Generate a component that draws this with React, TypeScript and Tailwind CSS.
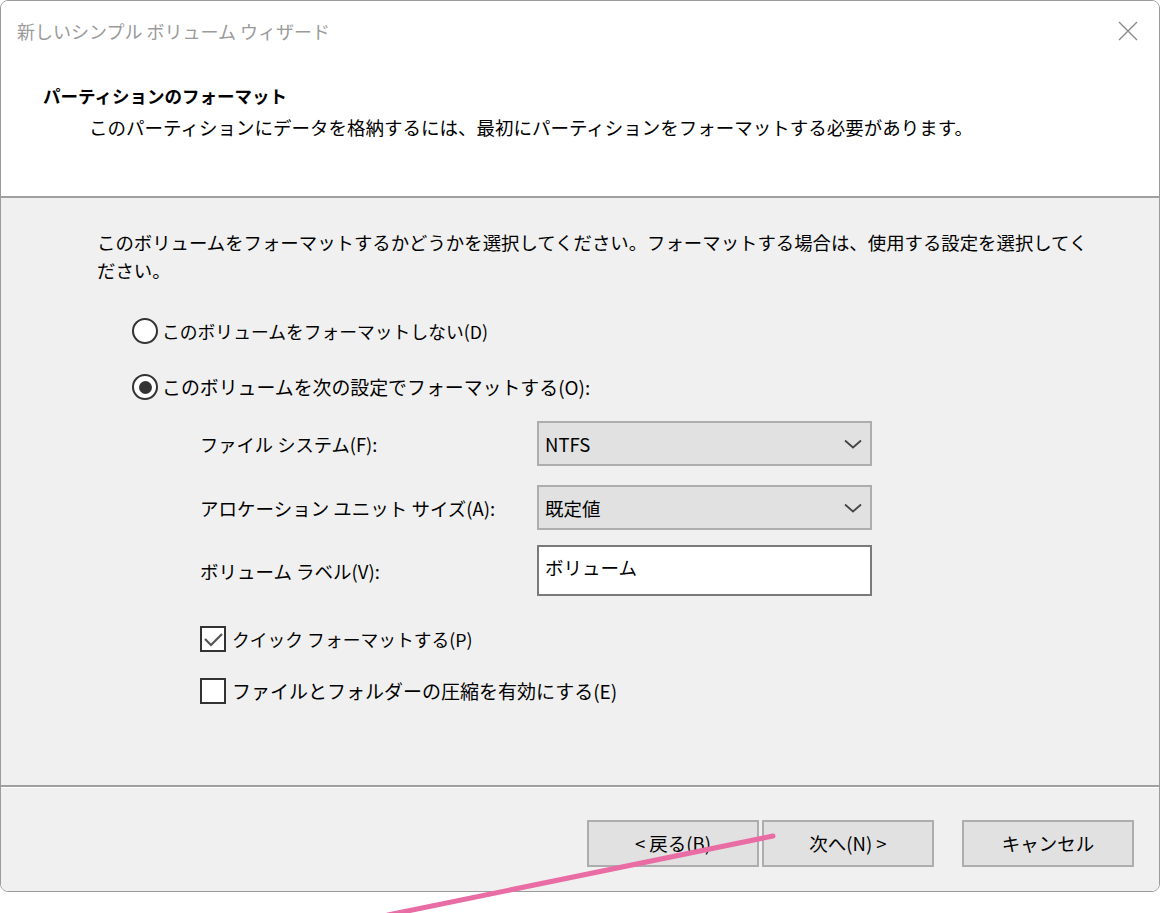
import React from 'react';

const font = "font-['Noto_Sans_CJK_JP','Noto_Sans',sans-serif]";

function Radio({ checked }: { checked?: boolean }) {
  return (
    <span className="w-[26px] h-[26px] rounded-full border-2 border-[#333333] bg-white flex items-center justify-center shrink-0">
      {checked && <span className="w-[13px] h-[13px] rounded-full bg-[#333333]" />}
    </span>
  );
}

function Checkbox({ checked }: { checked?: boolean }) {
  return (
    <span className="w-[26px] h-[26px] border-2 border-[#333333] bg-white flex items-center justify-center shrink-0">
      {checked && (
        <svg width="22" height="22" viewBox="0 0 22 22" fill="none" stroke="#555555" strokeWidth={2.2}>
          <path d="M3 11l6 6L20 6" />
        </svg>
      )}
    </span>
  );
}

function Chevron() {
  return (
    <svg width="18" height="10" viewBox="0 0 18 10" fill="none" stroke="#444444" strokeWidth={1.8}>
      <path d="M1 1.5l8 7 8-7" />
    </svg>
  );
}

function Dropdown({ value }: { value: string }) {
  return (
    <div className="w-[335px] h-[45px] border-2 border-[#adadad] bg-[#e1e1e1] flex items-center justify-between pl-[6px] pr-[8px]">
      <span className="text-[18.5px] leading-[24px] text-black">{value}</span>
      <Chevron />
    </div>
  );
}

function Button({ children }: { children: React.ReactNode }) {
  return (
    <div className="w-[172px] h-[47px] border-2 border-[#adadad] bg-[#e1e1e1] flex items-center justify-center text-[18.5px] text-black">
      {children}
    </div>
  );
}

export default function App() {
  return (
    <div className={`relative w-[1160px] h-[913px] bg-white overflow-hidden ${font}`}>
      <div className="w-[1160px] h-[892px] border border-[#9b9b9b] rounded-[8px] overflow-hidden flex flex-col">
        {/* header */}
        <div className="h-[195px] bg-white shrink-0">
          <div className="h-[59px] flex items-center justify-between pl-[16px] pr-[21px]">
            <span className="text-[18px] text-[#9a9a9a] leading-[24px]">新しいシンプル ボリューム ウィザード</span>
            <svg width="20" height="20" viewBox="0 0 20 20" fill="none" stroke="#8a8a8a" strokeWidth={1.4}>
              <path d="M1 1l18 18M19 1L1 19" />
            </svg>
          </div>
          <div className="pl-[42px] mt-[21px] text-[17.5px] font-bold leading-[30px] text-black">パーティションのフォーマット</div>
          <div className="pl-[88px] mt-[1px] text-[18.5px] leading-[30px] text-black">
            このパーティションにデータを格納するには、最初にパーティションをフォーマットする必要があります。
          </div>
        </div>
        <div className="h-[2px] bg-[#a0a0a0] shrink-0" />

        {/* body */}
        <div className="h-[587px] bg-[#f0f0f0] shrink-0 pl-[96px] pt-[30px] text-black">
          <p className="text-[18.4px] leading-[28px]">
            このボリュームをフォーマットするかどうかを選択してください。フォーマットする場合は、使用する設定を選択してく
            <br />
            ださい。
          </p>

          <div className="ml-[35px] mt-[27px] h-[40px] flex items-center gap-[4px]">
            <Radio />
            <span className="text-[17.8px] leading-[24px]">このボリュームをフォーマットしない(D)</span>
          </div>
          <div className="ml-[35px] mt-[16px] h-[40px] flex items-center gap-[4px]">
            <Radio checked />
            <span className="text-[18.9px] leading-[24px]">このボリュームを次の設定でフォーマットする(O):</span>
          </div>

          <div className="ml-[103px] mt-[14px] flex flex-col">
            <div className="flex items-center">
              <span className="w-[337px] text-[18.3px] leading-[24px]">ファイル システム(F):</span>
              <Dropdown value="NTFS" />
            </div>
            <div className="flex items-center mt-[19px]">
              <span className="w-[337px] text-[18.5px] leading-[24px]">アロケーション ユニット サイズ(A):</span>
              <Dropdown value="既定値" />
            </div>
            <div className="flex items-center mt-[15px]">
              <span className="w-[337px] text-[18.5px] leading-[24px]">ボリューム ラベル(V):</span>
              <div className="w-[335px] h-[51px] border-2 border-[#7a7a7a] bg-white pl-[6px] pt-[8px] text-[18.5px] leading-[24px]">
                ボリューム
              </div>
            </div>

            <div className="mt-[30px] h-[26px] flex items-center gap-[6px]">
              <Checkbox checked />
              <span className="text-[17.8px] leading-[24px]">クイック フォーマットする(P)</span>
            </div>
            <div className="mt-[26px] h-[26px] flex items-center gap-[6px]">
              <Checkbox />
              <span className="text-[19px] leading-[24px]">ファイルとフォルダーの圧縮を有効にする(E)</span>
            </div>
          </div>
        </div>

        <div className="h-[2px] bg-[#a0a0a0] shrink-0" />
        <div className="h-[1px] bg-white shrink-0" />

        {/* footer */}
        <div className="flex-1 bg-[#f0f0f0] flex items-start justify-end pt-[32px] pr-[25px]">
          <div className="flex">
            <Button>&lt; 戻る(B)</Button>
            <div className="ml-[3px]">
              <Button>次へ(N) &gt;</Button>
            </div>
            <div className="ml-[28px]">
              <Button>キャンセル</Button>
            </div>
          </div>
        </div>
      </div>

      {/* annotation line */}
      <svg className="absolute left-0 top-0 pointer-events-none" width="1160" height="913" viewBox="0 0 1160 913">
        <line x1="388" y1="915" x2="773" y2="836" stroke="#e96ca4" strokeWidth={5} strokeLinecap="round" />
      </svg>
    </div>
  );
}
